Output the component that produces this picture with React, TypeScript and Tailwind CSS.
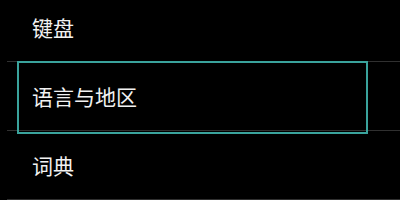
export default function App() {
  const items = ["键盘", "语言与地区", "词典"];
  return (
    <div className="w-[400px] h-[200px] bg-black overflow-hidden" style={{ fontFamily: '"Noto Sans CJK SC", "Noto Sans", sans-serif' }}>
      <div className="mt-[-7px] ml-[7px]">
        {items.map((label, i) => (
          <div key={label} className="relative h-[69px] flex items-center pl-[25px] border-b border-[#303030]">
            <span className="text-[21px] leading-none text-[#f2f2f2]">{label}</span>
            {i === 1 && (
              <div className="absolute left-[10px] top-[-1px] w-[351px] h-[73px] border-2 border-solid border-[#3aa39c] pointer-events-none" />
            )}
          </div>
        ))}
      </div>
    </div>
  );
}
